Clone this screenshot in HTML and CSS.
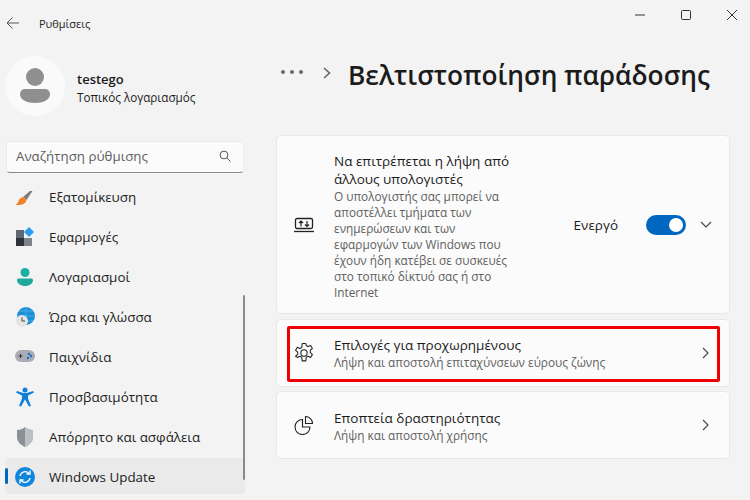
FILE: index.html
```html
<!DOCTYPE html>
<html lang="el">
<head>
<meta charset="utf-8">
<title>Ρυθμίσεις</title>
<link rel="stylesheet" href="styles.css">
</head>
<body>
<div class="app">
  <aside class="side">
    <div class="titlebar">
      <svg class="back" width="14" height="14" viewBox="0 0 14 14"><path d="M13 7H1M6.5 1.5 1 7l5.5 5.5" fill="none" stroke="#555" stroke-width="1"/></svg>
      <span class="apptitle">Ρυθμίσεις</span>
    </div>
    <div class="user">
      <div class="avatar">
        <svg width="30" height="36" viewBox="0 0 30 36"><circle cx="15" cy="9" r="9" fill="#8f8f8f"/><path d="M5 21h20a5 5 0 0 1 5 5c0 6-7 9-15 9S0 32 0 26a5 5 0 0 1 5-5z" fill="#8f8f8f"/></svg>
      </div>
      <div class="userinfo">
        <div class="username">testego</div>
        <div class="useracct">Τοπικός λογαριασμός</div>
      </div>
    </div>
    <div class="search">
      <span class="searchtext">Αναζήτηση ρύθμισης</span>
      <svg width="12" height="12" viewBox="0 0 12 12"><circle cx="5" cy="5" r="3.9" fill="none" stroke="#555"/><path d="M8 8l3.5 3.5" stroke="#555"/></svg>
    </div>
    <nav class="nav">
      <div class="navitem">
        <svg class="navicon" width="20" height="20" viewBox="0 0 20 20"><path d="M8 10 15 4h2.500l-6 9z" fill="#7d7d7d"/><path d="M8 10c-3 .5-4 2.500-4.500 4-.4 1.500-1.500 3-3 4 5 .5 10-.5 11-5z" fill="#f0802a"/></svg>
        <span>Εξατομίκευση</span>
      </div>
      <div class="navitem">
        <svg class="navicon" width="20" height="20" viewBox="0 0 20 20"><rect x="1" y="3" width="8" height="8" fill="#5e6670"/><rect x="1" y="11" width="8" height="8" fill="#2f3338"/><rect x="9" y="11" width="8" height="8" fill="#7c8389"/><path d="M14 0l5 5-5 5-5-5z" fill="#2a9df0"/></svg>
        <span>Εφαρμογές</span>
      </div>
      <div class="navitem">
        <svg class="navicon" width="20" height="20" viewBox="0 0 20 20"><circle cx="10" cy="5.500" r="4.500" fill="#18b0a4"/><path d="M3.500 11.500h13a1.500 1.500 0 0 1 1.500 1.500c0 3.500-3.500 6-8 6s-8-2.500-8-6a1.500 1.500 0 0 1 1.500-1.500z" fill="#1fa99c"/></svg>
        <span>Λογαριασμοί</span>
      </div>
      <div class="navitem">
        <svg class="navicon" width="20" height="20" viewBox="0 0 20 20"><circle cx="11" cy="9" r="9" fill="#1c8fd6"/><path d="M11 0v18M2 9h18M4 4h14M4 14h14" stroke="#6cc5ee" stroke-width=".6"/><circle cx="7" cy="14" r="6" fill="#e4e4e4"/><path d="M7 10.500V14h3" fill="none" stroke="#444"/></svg>
        <span>Ώρα και γλώσσα</span>
      </div>
      <div class="navitem">
        <svg class="navicon" width="20" height="20" viewBox="0 0 20 20"><rect y="3" width="20" height="12" rx="6" fill="#a9adb3"/><path d="M3.500 9h4M5.500 7v4" stroke="#333"/><circle cx="14" cy="7" r="1.200" fill="#1a6fc9"/><circle cx="16" cy="9" r="1.200" fill="#1a6fc9"/><circle cx="13" cy="11" r="1.200" fill="#1a6fc9"/></svg>
        <span>Παιχνίδια</span>
      </div>
      <div class="navitem">
        <svg class="navicon" width="20" height="20" viewBox="0 0 20 20"><circle cx="10" cy="3" r="2.500" fill="#0f7fd8"/><path d="M2 4l6 2h4l6-2 1 1.500-6 3v3l3 7.500-2 .5-4-7-4 7-2-.5 3-7.500v-3l-6-3z" fill="#0f7fd8"/></svg>
        <span>Προσβασιμότητα</span>
      </div>
      <div class="navitem">
        <svg class="navicon" width="20" height="20" viewBox="0 0 20 20"><path d="M10 0c2 2 5 3 8 3v7c0 5-4 8-8 10-4-2-8-5-8-10V3c3 0 6-1 8-3z" fill="#8b9097"/><path d="M10 0v20c4-2 8-5 8-10V3c-3 0-6-1-8-3z" fill="#bcc0c5"/></svg>
        <span>Απόρρητο και ασφάλεια</span>
      </div>
      <div class="navitem active">
        <svg class="navicon" width="20" height="20" viewBox="0 0 20 20"><circle cx="10" cy="10" r="10" fill="#0f86dc"/><path d="M5 9a5.200 5.200 0 0 1 9-2.500M15 11a5.200 5.200 0 0 1-9 2.500" fill="none" stroke="#fff" stroke-width="1.300"/><path d="M15 3.500v3.500h-3.500M5 16.500V13h3.500" fill="none" stroke="#fff" stroke-width="1.300"/></svg>
        <span>Windows Update</span>
      </div>
    </nav>
    <div class="scrollbar"></div>
  </aside>
  <main class="main">
    <div class="winctrl">
      <svg width="10" height="10" viewBox="0 0 10 10"><path d="M0 5h10" stroke="#333"/></svg>
      <svg width="10" height="10" viewBox="0 0 10 10"><rect x=".5" y=".5" width="9" height="9" rx="1" fill="none" stroke="#333"/></svg>
      <svg width="10" height="10" viewBox="0 0 10 10"><path d="M0 0l10 10M10 0 0 10" stroke="#333"/></svg>
    </div>
    <header class="crumb">
      <svg class="dots" width="24" height="6" viewBox="0 0 24 6"><circle cx="3" cy="3" r="2" fill="#6a6a6a"/><circle cx="12" cy="3" r="2" fill="#6a6a6a"/><circle cx="21" cy="3" r="2" fill="#6a6a6a"/></svg>
      <svg class="crumbsep" width="8" height="12" viewBox="0 0 8 12"><path d="M1 1l5.500 5L1 11" fill="none" stroke="#666" stroke-width="1.600"/></svg>
      <h1>Βελτιστοποίηση παράδοσης</h1>
    </header>
    <section class="cards">
      <div class="card tall">
        <svg class="cardicon" width="20" height="16" viewBox="0 0 20 16"><rect x="1.500" y="1.500" width="17" height="10" rx="1.500" fill="none" stroke="#222" stroke-width="1.300"/><path d="M0 14.500h20" stroke="#222" stroke-width="1.300"/><path d="M7 9.500V4M5 6l2-2 2 2M13 4v5.500M11 7.500l2 2 2-2" fill="none" stroke="#222" stroke-width="1.200"/></svg>
        <div class="cardtext">
          <div class="cardtitle">Να επιτρέπεται η λήψη από άλλους υπολογιστές</div>
          <div class="carddesc">Ο υπολογιστής σας μπορεί να αποστέλλει τμήματα των ενημερώσεων και των εφαρμογών των Windows που έχουν ήδη κατέβει σε συσκευές στο τοπικό δίκτυό σας ή στο Internet</div>
        </div>
        <div class="cardright">
          <span class="state">Ενεργό</span>
          <span class="toggle"><span class="knob"></span></span>
          <svg width="12" height="8" viewBox="0 0 12 8"><path d="M1 1l5 5 5-5" fill="none" stroke="#444" stroke-width="1.100"/></svg>
        </div>
      </div>
      <div class="card">
        <svg class="cardicon" width="20" height="20" viewBox="1.500 1 17 19"><path d="M8.300 1.500h3.400l.5 2.100 1.700.8 2.400-1.100 1.700 2.900-2 1.700v2.200l2 1.700-1.700 2.900-2.400-1.100-1.700.8-.5 3.600H8.300l-.5-3.600-1.700-.8-2.400 1.100L2 13.600l2-1.700V9.700L2 8l1.700-2.900 2.400 1.100 1.700-.8z" fill="none" stroke="#222" stroke-linejoin="round"/><circle cx="10" cy="10.500" r="3" fill="none" stroke="#222"/></svg>
        <div class="cardtext">
          <div class="cardtitle">Επιλογές για προχωρημένους</div>
          <div class="carddesc">Λήψη και αποστολή επιταχύνσεων εύρους ζώνης</div>
        </div>
        <svg class="chev" width="8" height="12" viewBox="0 0 8 12"><path d="M1 1l5 5-5 5" fill="none" stroke="#444" stroke-width="1.100"/></svg>
      </div>
      <div class="card">
        <svg class="cardicon" width="20" height="20" viewBox="0 0 20 20"><path d="M8.500 4.500a7.500 7.500 0 1 0 7.500 7.500H8.500z" fill="none" stroke="#222" stroke-width="1.100"/><path d="M11.500 1.500a7 7 0 0 1 7 7h-7z" fill="none" stroke="#222" stroke-width="1.100"/></svg>
        <div class="cardtext">
          <div class="cardtitle">Εποπτεία δραστηριότητας</div>
          <div class="carddesc">Λήψη και αποστολή χρήσης</div>
        </div>
        <svg class="chev" width="8" height="12" viewBox="0 0 8 12"><path d="M1 1l5 5-5 5" fill="none" stroke="#444" stroke-width="1.100"/></svg>
      </div>
    </section>
    <div class="highlight"></div>
  </main>
</div>
</body>
</html>
```
FILE: styles.css
```css
* { box-sizing: border-box; }
html, body { margin: 0; height: 100%; }
body { background: #f3f3f3; font-family: "Open Sans", "Noto Sans", sans-serif; color: #1b1b1b; overflow: hidden; }
.app { display: flex; width: 750px; height: 500px; position: relative; overflow: hidden; }
.side { width: 250px; flex: none; padding-left: 5px; position: relative; }
.titlebar { display: flex; align-items: center; height: 46px; padding-left: 1px; }
.back { flex: none; }
.apptitle { font-size: 11px; margin-left: 19px; color: #222; }
.user { display: flex; align-items: center; gap: 12px; height: 60px; margin-top: 10px; }
.avatar { width: 60px; height: 60px; border-radius: 50%; background: #fafafa; display: flex; align-items: center; justify-content: center; }
.userinfo { padding-top: 3px; }
.username { font-size: 13px; font-weight: 600; line-height: 18px; }
.useracct { font-size: 11.700px; line-height: 18px; }
.search { margin: 25px 0 0 1px; width: 238px; height: 32px; background: #fbfbfb; border: 1px solid #ececec; border-bottom: 1px solid #8a8a8a; border-radius: 4px; display: flex; align-items: center; justify-content: space-between; padding: 0 12px 2px 9px; }
.searchtext { font-size: 13.300px; color: #5f5f5f; }
.nav { display: flex; flex-direction: column; margin-top: 5px; gap: 4px; }
.navitem { height: 36px; width: 240px; display: flex; align-items: center; gap: 14px; padding: 2px 0 0 10px; font-size: 13.400px; color: #222; border-radius: 4px; position: relative; flex: none; }
.navicon { flex: none; }
.navitem.active { background: #eaeaea; }
.navitem.active::before { content: ""; position: absolute; left: 0; top: 10px; width: 3px; height: 16px; background: #0067c0; border-radius: 2px; }
.scrollbar { position: absolute; left: 243px; top: 295px; width: 2px; height: 185px; background: #8a8a8a; border-radius: 1px; }
.main { flex: 1; padding: 0 20px 0 26px; position: relative; }
.winctrl { display: flex; justify-content: flex-end; gap: 36px; height: 30px; padding: 10px 0 0; margin-right: -7px; }
.crumb { display: flex; align-items: center; height: 48px; margin-top: 18px; }
.dots { margin-left: 4px; }
.crumbsep { margin: 2px 0 0 19px; flex: none; }
h1 { margin: 6px 0 0 17px; font-size: 26.300px; font-weight: 600; color: #1b1b1b; white-space: nowrap; line-height: 44px; }
.cards { display: flex; flex-direction: column; gap: 4.500px; margin-top: 39px; width: 454px; }
.card { background: #fbfbfb; border: 1px solid #e8e8e8; border-radius: 5px; min-height: 68px; display: flex; align-items: center; padding: 0 17px; }
.card.tall { height: 179px; }
.cardicon { flex: none; }
.cardtext { flex: 1; margin-left: 20px; min-width: 0; padding-top: 1px; }
.tall .cardtext { flex: none; width: 180px; padding-top: 3px; }
.cardtitle { font-size: 13.500px; line-height: 18px; color: #1b1b1b; }
.carddesc { font-size: 11.800px; line-height: 16px; color: #606060; }
.cardright { margin-left: auto; display: flex; align-items: center; }
.state { font-size: 13.500px; }
.toggle { width: 40px; height: 20px; border-radius: 10px; background: #0067c0; margin: 0 14px 0 28px; display: flex; align-items: center; justify-content: flex-end; padding-right: 3px; }
.knob { width: 14px; height: 14px; border-radius: 50%; background: #fff; }
.chev { flex: none; margin-right: 2px; }
.highlight { position: absolute; left: 37px; top: 326px; width: 433px; height: 56px; border: 3px solid #f00000; border-radius: 2px; }
```
